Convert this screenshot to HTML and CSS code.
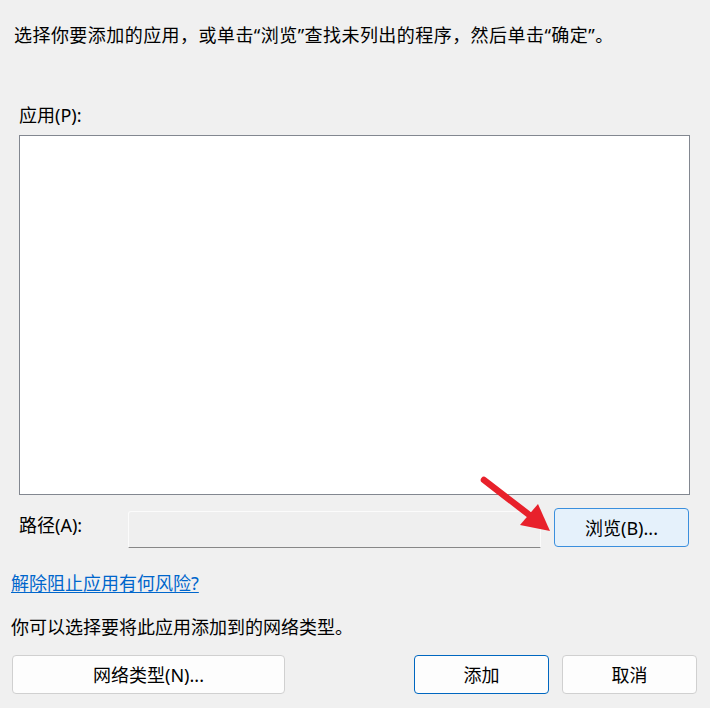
FILE: index.html
```html
<!DOCTYPE html>
<html lang="zh-CN">
<head>
<meta charset="utf-8">
<link rel="stylesheet" href="styles.css">
</head>
<body>
<div class="dialog">
  <p class="intro">选择你要添加的应用，或单击“浏览”查找未列出的程序，然后单击“确定”。</p>
  <div class="label apps-label">应用(P):</div>
  <div class="listbox"></div>
  <div class="path-row">
    <span class="path-label">路径(A):</span>
    <div class="path-input"></div>
    <button class="btn browse">浏览(B)...</button>
  </div>
  <a class="link" href="#">解除阻止应用有何风险?</a>
  <p class="hint">你可以选择要将此应用添加到的网络类型。</p>
  <div class="actions">
    <button class="btn wide">网络类型(N)...</button>
    <div class="right">
      <button class="btn primary">添加</button>
      <button class="btn">取消</button>
    </div>
  </div>
  <svg class="arrow" width="710" height="708" viewBox="0 0 710 708">
    <line x1="484" y1="480" x2="532" y2="517" stroke="#e8212b" stroke-width="6.5" stroke-linecap="round"/>
    <polygon points="550,531 538,504 520,525" fill="#e8212b"/>
  </svg>
</div>
</body>
</html>
```
FILE: styles.css
```css
* { box-sizing: border-box; }
html, body {
  margin: 0;
  padding: 0;
  background: #f0f0f0;
}
body {
  width: 710px;
  height: 708px;
  overflow: hidden;
  font-family: "Noto Sans", "Noto Sans CJK SC", sans-serif;
  font-size: 18px;
  color: #000;
}
.dialog {
  position: relative;
  width: 710px;
  height: 708px;
  padding-top: 23px;
}
.intro {
  margin: 0 0 0 14px;
  line-height: 24px;
  height: 24px;
  letter-spacing: 0.45px;
}
.apps-label {
  margin: 56px 0 0 19px;
  line-height: 24px;
  height: 24px;
}
.listbox {
  margin: 8px 0 0 19px;
  width: 671px;
  height: 360px;
  background: #fff;
  border: 1px solid #828790;
}
.path-row {
  display: flex;
  align-items: flex-start;
  margin: 13px 0 0 19px;
  height: 40px;
}
.path-label {
  width: 109px;
  margin-top: 5px;
  line-height: 24px;
}
.path-input {
  margin-top: 3px;
  width: 413px;
  height: 37px;
  background: #efefef;
  border: 1px solid #fbfbfb;
  border-bottom: 1px solid #878787;
  border-radius: 3px 3px 0 0;
}
.btn {
  font-family: "Noto Sans", "Noto Sans CJK SC", sans-serif;
  font-size: 18px;
  color: #000;
  height: 39px;
  width: 135px;
  padding: 0;
  line-height: 24px;
  background: #fdfdfd;
  border: 1px solid #d0d0d0;
  border-radius: 4px;
}
.browse {
  margin-left: 13px;
  background: #e5f1fb;
  border-color: #3b8fdd;
}
.link {
  display: block;
  width: max-content;
  margin: 23px 0 0 11px;
  line-height: 24px;
  color: #0066cc;
  text-decoration: underline;
  text-underline-offset: 2px;
}
.hint {
  margin: 20px 0 0 11px;
  line-height: 24px;
}
.actions {
  display: flex;
  justify-content: space-between;
  margin: 16px 13px 0 12px;
}
.wide {
  width: 273px;
}
.right {
  display: flex;
  gap: 13px;
}
.primary {
  border-color: #0067c0;
}
.arrow {
  position: absolute;
  left: 0;
  top: 0;
  pointer-events: none;
}
```
